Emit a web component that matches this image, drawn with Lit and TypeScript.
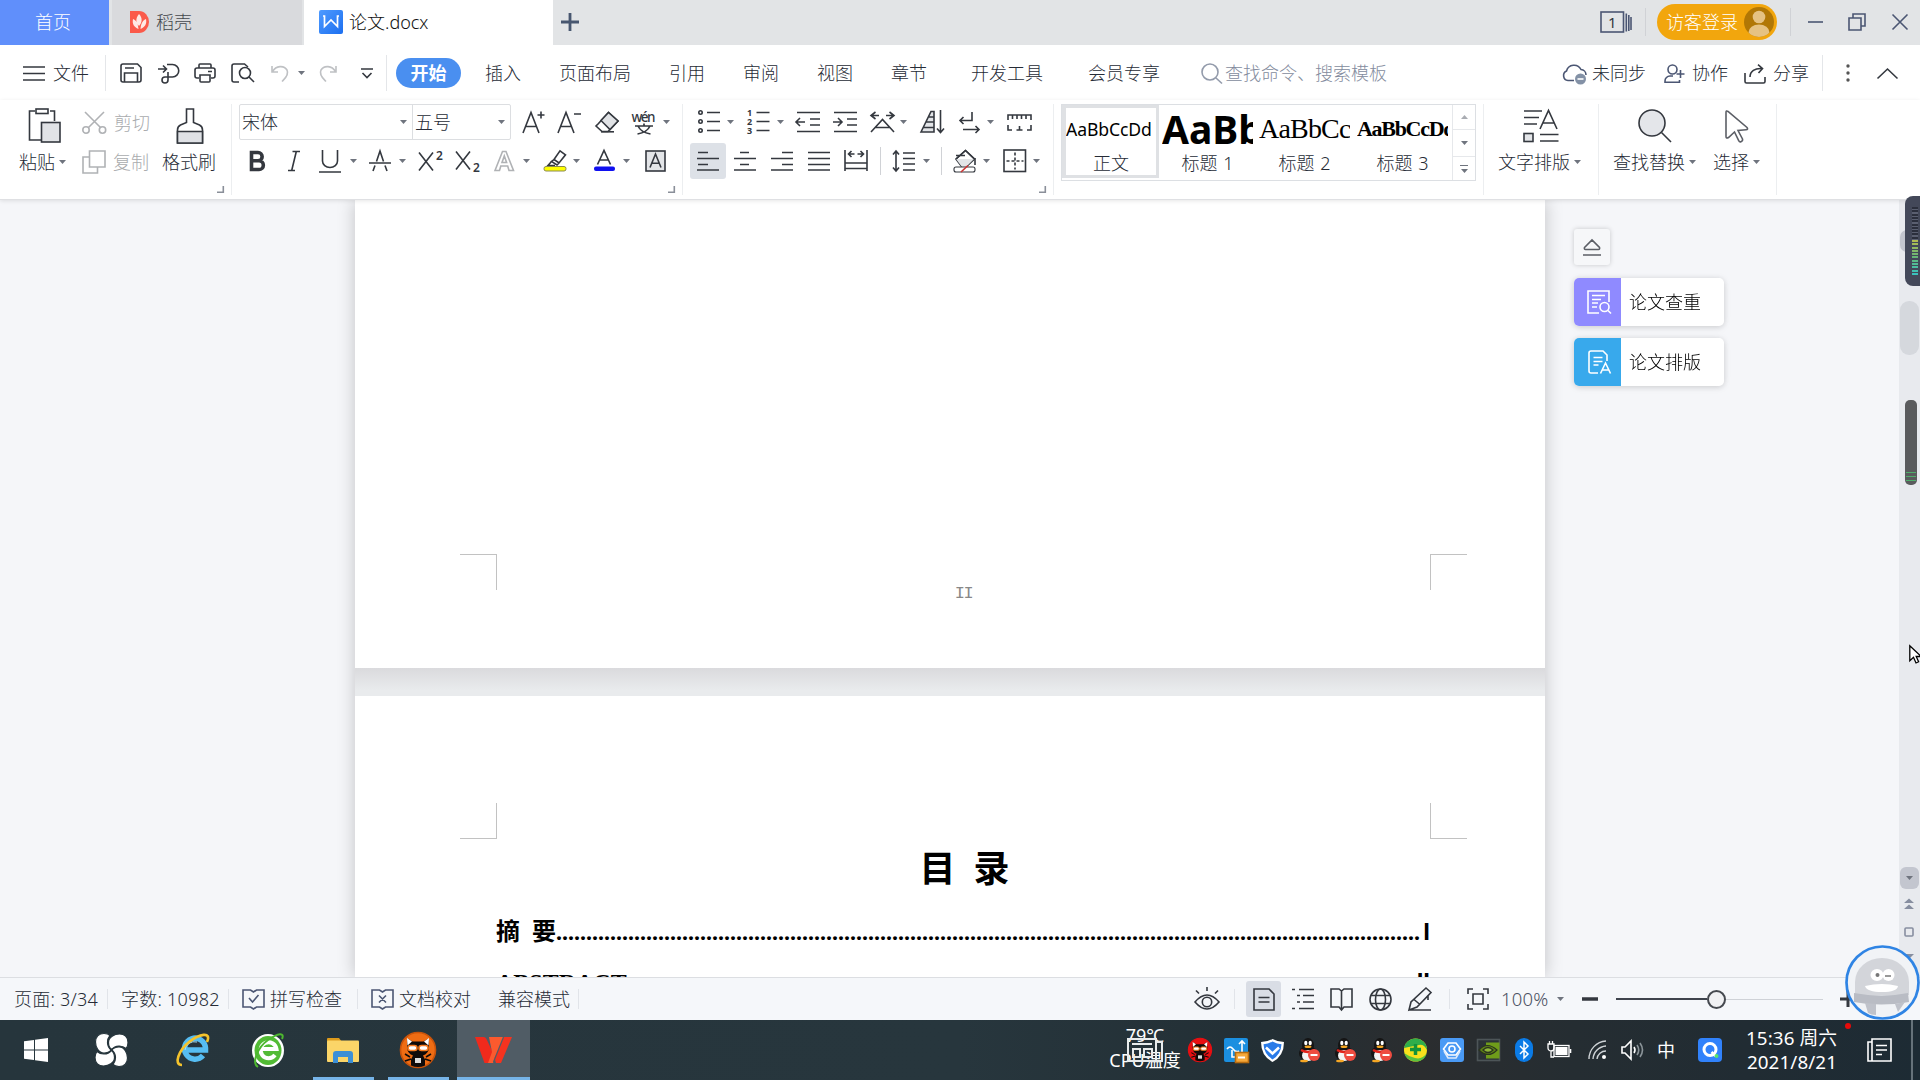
import { LitElement, html, svg, css } from "lit";
import { customElement } from "lit/decorators.js";

const ic = (w: number, h: number, body: unknown, cls = "") =>
  html`<svg class="ic ${cls}" width=${w} height=${h} viewBox="0 0 ${w} ${h}">${body}</svg>`;
const p = (d: string) => svg`<path d=${d}></path>`;
const caret = html`<svg class="caret" width="7" height="4" viewBox="0 0 7 4"><path d="M0 0h7L3.5 4z"></path></svg>`;
const corner = html`<svg class="ic corner" width="7" height="7" viewBox="0 0 7 7"><path d="M6.3 0V6.3H0"></path></svg>`;

/* ---------- title bar ---------- */
const docer = ic(19, 22, svg`<path d="M0 0h9a10 11 0 0 1 0 22H0z" fill="#fb5a4a" stroke="none"></path>
  <path d="M9 3c4 4 3 9 0 12C6 12 5 8 9 3zM3 8c3 1 5 4 5.500 10C4 16 2 13 3 8zM16 8c-3 1-5 4-5.500 10C15 16 17 13 16 8z" fill="#ffe9e4" stroke="none"></path>`);
const writer = ic(24, 24, svg`<defs><linearGradient id="wg" x1="0" y1="0" x2="1" y2="1"><stop offset="0" stop-color="#4f9bff"></stop><stop offset="1" stop-color="#1c6ff0"></stop></linearGradient></defs>
  <rect width="24" height="24" rx="2" fill="url(#wg)" stroke="none"></rect><path d="M4 6h1.500v10.500L12 10l6.500 6.500V6H20" stroke="#fff" stroke-width="1.700"></path>`);
const plus = ic(18, 18, svg`<path d="M9 0v18M0 9h18" stroke="#47566f" stroke-width="2.800"></path>`);
const tabsCount = html`<svg class="ic navy" width="32" height="22" viewBox="0 0 32 22"><rect x="1" y="1" width="22.500" height="20"></rect><path d="M26.300 2.500v18M28.800 4v16M31 6v13"></path><text class="cnt" x="8" y="16.500">1</text></svg>`;
const avatar = ic(30, 30, svg`<defs><clipPath id="ac"><circle cx="15" cy="15" r="15"></circle></clipPath></defs>
  <circle cx="15" cy="15" r="15" fill="#b17705" stroke="none"></circle><g clip-path="url(#ac)"><circle cx="15" cy="10" r="6.300" fill="#e6c282" stroke="none"></circle><ellipse cx="15" cy="25.500" rx="10.500" ry="8" fill="#e6c282" stroke="none"></ellipse></g>`);

/* ---------- quick access ---------- */
const burger = ic(22, 15, p("M0 1h22M0 7.500h22M0 14h22"));
const save = ic(22, 20, p("M3 1h14.500L21 4.500V17a2 2 0 0 1-2 2H3a2 2 0 0 1-2-2V3a2 2 0 0 1 2-2zM4.500 19V10h13v9M5 5h9"));
const exportPdf = ic(22, 21, p("M0 6h8M5 2.500L8.500 6 5 9.500M9 1.500h5.500a6.200 6.200 0 0 1 0 12.500H7a3 3 0 1 0 3 3V9"));
const print = ic(22, 20, p("M5 5V2a1 1 0 0 1 1-1h10a1 1 0 0 1 1 1v3M5 15H3a2 2 0 0 1-2-2V7a2 2 0 0 1 2-2h16a2 2 0 0 1 2 2v6a2 2 0 0 1-2 2h-2M6 12h10v6a1 1 0 0 1-1 1H7a1 1 0 0 1-1-1zM14 8.500h4"));
const preview = ic(24, 20, svg`<path d="M8 19H3a2 2 0 0 1-2-2V3a2 2 0 0 1 2-2h10.500L17 4"></path><circle cx="14" cy="10" r="5.500"></circle><path d="M18 14l5 5"></path>`);
const undo = ic(18, 17, p("M1 1v6h6M1.500 6.500C5 .5 13 0 16 5c2.500 5-3 9.500-5 11.500"), "dim");
const redo = ic(18, 17, p("M17 1v6h-6M16.500 6.500C13 .5 5 0 2 5c-2.500 5 3 9.500 5 11.500"), "dim");
const more = ic(12, 11, p("M0 1h12M1.500 5L6 9.500 10.500 5"));
const search = ic(22, 21, svg`<circle cx="9" cy="9" r="8"></circle><path d="M15 15l6 5.500"></path>`, "grayblue");
const cloud = ic(26, 22, svg`<path d="M12 18.500H6A5 5 0 0 1 4.500 9 7.800 7.800 0 0 1 19 7.500 5.500 5.500 0 0 1 24 13"></path><circle cx="18.500" cy="17" r="5.500" fill="#8391a6" stroke="none"></circle><path d="M15.500 17h6" stroke="#fff"></path>`, "navy");
const collab = ic(21, 20, svg`<circle cx="8.500" cy="6.500" r="4.500"></circle><path d="M16.500 7v8M12.500 11h8M9 13H6a5 5 0 0 0-5 5v1.200h14.500V17"></path>`, "navy");
const share = ic(22, 20, p("M1 10v8.500a1.500 1.500 0 0 0 1.500 1.500h17a1.500 1.500 0 0 0 1.500-1.500V14M6 14c0-6 5-9 12-8.500M14 1.700L18.500 5.500 14.500 10"));
const dots = ic(4, 20, svg`<circle cx="2" cy="3" r="1.700" fill="#555" stroke="none"></circle><circle cx="2" cy="10" r="1.700" fill="#555" stroke="none"></circle><circle cx="2" cy="17" r="1.700" fill="#555" stroke="none"></circle>`);
const chevUp = ic(21, 11, p("M.5 10.500L10.500 1l10 9.500"));

/* ---------- ribbon ---------- */
const paste = ic(33, 36, svg`<path d="M7 3H1.500v29H13M22 3h4.500v10"></path><rect x="8" y="1" width="12" height="4.500"></rect><rect x="13.500" y="14.500" width="18.500" height="19.500" fill="#e1e3e6"></rect>`);
const cut = ic(25, 22, svg`<path d="M3 0l16 16M22 0L6 16"></path><circle cx="4" cy="18" r="3.200"></circle><circle cx="20.500" cy="18" r="3.200"></circle>`, "dim2");
const copy = ic(24, 24, p("M7.500 1H23v16H7.500zM7.500 7H1v16h14.500v-6"), "dim2");
const brush = ic(28, 36, svg`<path d="M10.500 1h7v13.500l6 2.500q3 1.500 3 5v13H1.500V22q0-3.500 3-5l6-2.500z"></path><path d="M1.500 23.500h25V35h-25z" fill="#dfe1e5"></path>`);
const aPlus = ic(23, 24, p("M0 23L8 2.500 16 23M2.700 16.500h10.600M14.500 5h7M18 1.500v7"));
const aMinus = ic(25, 24, p("M0 23L8 2.500 16 23M2.700 16.500h10.600M16 4h7"));
const eraser = ic(24, 22, svg`<path d="M3.500 12.500L13.500 1.500l9.500 8.500-10 10.500H7L1 15z"></path><path d="M6 9.500l9 9 8-8.500L13.500 1.500z" fill="#e1e3e6"></path><path d="M6 20.800h13"></path>`);
const wen = html`<svg class="ic" width="24" height="26" viewBox="0 0 24 26"><text class="wen" x="-0.5" y="12.5" textLength="24">wén</text><path d="M3 17h18M12 14.500v2.500M6 17q3 6.500 12.500 8M18 17q-3 6.500-12.500 8" stroke-width="1.700"></path></svg>`;
const bold = html`<svg class="ic" width="17" height="22" viewBox="0 0 17 22"><path d="M2.500 2.500h6.500a4 4 0 0 1 0 8.300H2.500zM2.500 10.800h7.500a4.300 4.300 0 0 1 0 8.700H2.500z" stroke-width="3.600"></path></svg>`;
const italic = ic(12, 22, p("M4.500 1.500H12M0 20.500h7M8.300 1.500l-4.600 19"));
const underline = ic(22, 23, p("M3.500 0v11a7.500 6.500 0 0 0 15 0V0M0 22h22"));
const strike = ic(23, 22, p("M4 21l2-5.500M18 21l-2-5.500M7.500 11.500L11 1l3.500 10.500M0 13h22"));
const sup = html`<svg class="ic" width="25" height="22" viewBox="0 0 25 22"><path d="M1 2.500l14 18M15 2.500L1 20.500"></path><text class="sm" x="18" y="10">2</text></svg>`;
const sub = html`<svg class="ic" width="25" height="22" viewBox="0 0 25 22"><path d="M1 1.500l14 18M15 1.500L1 19.500"></path><text class="sm" x="18" y="21.500">2</text></svg>`;
const outlineA = ic(21, 22, p("M1 20.500L8.500 1.500h3.500L19.500 20.500H15L13.700 16H6.800L5.500 20.500zM8 12.500h4.600L10.300 6z"), "dim2");
const hilite = ic(24, 22, svg`<path d="M11 9.500L17 .8l5.500 4L16 13zM11 9.500L8.500 11.500 14 15l2-2M8.500 11.500L5 15.500h7"></path><rect x="1" y="16.500" width="22" height="4.500" rx="2" fill="#ff0" stroke="#8a8a52" stroke-width="1"></rect>`);
const fontColor = ic(21, 22, svg`<path d="M3.500 14.500L10 .5l6.500 14M5.500 10h9"></path><rect x="0" y="16.500" width="21" height="4.500" rx="2" fill="#1010f0" stroke="none"></rect>`);
const boxA = ic(21, 22, svg`<rect x="1" y="1" width="19" height="20" fill="#e3e5e8"></rect><path d="M5 17.500L10.500 4 16 17.500M7 13.300h7"></path>`);

const bullets = ic(24, 24, svg`<circle cx="2.500" cy="2.500" r="1.700"></circle><circle cx="2.500" cy="11.500" r="1.700"></circle><circle cx="2.500" cy="20.500" r="1.700"></circle><path d="M9 2.500h13M9 11.500h13M9 20.500h13"></path>`);
const numbers = html`<svg class="ic" width="24" height="24" viewBox="0 0 24 24"><text class="num" x="0" y="5.5">1</text><text class="num" x="0" y="14.5">2</text><text class="num" x="0" y="23.5">3</text><path d="M9.500 2.500h13M9.500 11.500h13M9.500 20.500h13"></path></svg>`;
const outdent = ic(24, 22, p("M1 1.500h23M14 8h10M14 14h10M1 20.500h23M0 11h9M4 7L0 11l4 4"));
const indent = ic(24, 22, p("M1 1.500h23M14 8h10M14 14h10M1 20.500h23M0 11h9M5 7l4 4-4 4"));
const asian = ic(25, 22, p("M5.500 1L1 4.500 5.500 8M1 4.500h8M19.500 1L24 4.500 19.500 8M24 4.500h-8M1 21L12.500 8.500 24 21M5.500 16.500h14"));
const sortIc = ic(24, 24, svg`<path d="M1 22L11 1.500h3V22zM6 12h8M3.500 17.500H14M8.500 7H14" fill="#e3e5e8"></path><path d="M20.500 0v22M17 18.500l3.500 4 3.500-4"></path>`);
const wrap = ic(21, 22, p("M13 1v8.500H1M4.500 6L1 9.500 4.500 13M4 18.500h16M16.500 15l3.500 3.500-3.500 3.500"));
const ruler = ic(25, 17, p("M1 6V1h23v5M5.500 1v4M10 1v4M14.500 1v4M19 1v4M1 11v5h4M20 16h4v-5M9.500 16h6M12.500 16v-4"));
const lines = (d: string) => ic(22, 20, p(d));
const alL = lines("M1 1.500h10M0 7.500h22M1 13.500h10M0 19h22");
const alC = lines("M6 1.500h9M0 7.500h22M6 13.500h9M0 19h22");
const alR = lines("M11 1.500h11M0 7.500h22M11 13.500h11M0 19h22");
const alJ = lines("M0 1.500h22M0 7.500h22M0 13.500h22M0 19h22");
const dist = ic(24, 22, p("M1 0v21M23 0v21M1 13h22M1 18.500h22M4.500 4h6M7.500 1l-3 3 3 3M19.500 4h-6M16.500 1l3 3-3 3"));
const spacing = ic(24, 22, p("M4 1v20M1 4.500L4 1l3 3.500M1 17.500L4 21l3-3.500M11 3h12M11 8.500h12M11 14h12M11 20h12"));
const fill = ic(25, 24, svg`<path d="M3 10L12.500 1.500l9 8.500-8.500 8H9z"></path><path d="M3 10h18l-8 8H9z" fill="#e3e5e8" stroke="none"></path><path d="M3 6.500h9M22 9v7M3 10L12.500 1.500l9 8.500"></path><rect x="1" y="18" width="21" height="5" rx="2" fill="#fff" stroke-width="1.100"></rect><path d="M8 23L15 16.500" stroke="#c33"></path>`);
const border = ic(24, 24, svg`<rect x="1" y="1" width="21.500" height="21.500"></rect><path d="M12 3.500v17M3.500 12h17" stroke-dasharray="3 2"></path>`);
const typeset = ic(36, 34, svg`<path d="M1 2h18M1 8.500h15M1 15h13M17 20L25.500 1.500 34 20M20 14h11M17 25.500h18.500M17 32h18.500"></path><rect x="1" y="24.500" width="9" height="8" fill="#e3e5e8"></rect>`);
const find = ic(34, 34, svg`<circle cx="14" cy="14" r="13" fill="#e4e6ea"></circle><path d="M23.500 23.500L33 33"></path>`);
const pick = ic(24, 34, p("M1 3.500q0-2.500 2-1L22 18.500q1.500 2-1 2.200l-8 .8 4.500 8.500q.5 2-1.500 2.700-1.500.5-2.300-1L9.500 23 3.500 28.500Q1 30 1 27.500z"), "gray");

/* ---------- status ---------- */
const book = (m: string) => ic(23, 22, p("M1 2h7.500l3 2 3-2H22v17h-7.500l-3 2-3-2H1z" + m), "navy");
const eye = ic(26, 24, svg`<path d="M1 15q12-14 24 0-12 14-24 0zM13 0v4M2 3.500l3 3M24 3.500l-3 3"></path><circle cx="13" cy="15" r="4.700"></circle>`);
const docIc = ic(22, 23, p("M1 1h15l5 5v16H1zM5.500 9.500h11M5.500 14h11"));
const outl = ic(22, 22, p("M0 1.500h3M7 1.500h15M5 7.500h3M11 7.500h11M5 14h3M11 14h11M0 20.500h3M7 20.500h15"));
const reader = ic(23, 23, p("M1 1h8l2.500 2L14 1h8v18h-8l-2.500 3L9 19H1zM11.500 3v18"));
const globe = ic(23, 23, svg`<circle cx="11.500" cy="11.500" r="10.500"></circle><ellipse cx="11.500" cy="11.500" rx="5" ry="10.500"></ellipse><path d="M2 7.500h19M2 15.500h19"></path>`);
const pen = ic(25, 24, p("M1 23l2-8L18 1l5 4.500L9 20zM6 12.500l6 5M1 23h22M20 8v5"));
const fit = ic(22, 22, p("M6 1H1v5M16 1h5v5M6 21H1v-5M16 21h5v-5M6 6h10v10H6z"));

/* ---------- taskbar ---------- */
const win = ic(24, 24, svg`<path d="M0 3.300L10 2v9.500H0zM11 1.800L24 0v11.500H11zM0 12.500h10V22L0 20.700zM11 12.500h13V24l-13-1.800z" fill="#fff" stroke="none"></path>`);
const petal = (a: number) => svg`<path transform="rotate(${a} 16.5 17)" d="M9 .5C3.500 .5 .5 4 .5 9s3 11 8.500 11c3 0 5.500-1 7-3C11.500 13 11.500 6.500 15 2.500 13 .5 11 .5 9 .5z"></path>`;
const swirl = ic(33, 34, svg`<g fill="#fff" stroke="#26353c" stroke-width="1.200">${petal(0)}${petal(90)}${petal(180)}${petal(270)}</g>`);
const ie = html`<svg class="ic" width="34" height="34" viewBox="0 0 34 34"><path d="M27 22.500a10.500 10.500 0 1 1 2.500-7.500v2H10" stroke="#56bdf2" stroke-width="5.500"></path><path d="M9 17a9.500 9 0 0 1 12-8" stroke="#a6e2fb" stroke-width="1"></path><path d="M6 32C-3 32 3 17 13 9S36-2 31 9" stroke="#f4c32c" stroke-width="2.600"></path></svg>`;
const greenE = html`<svg class="ic" width="33" height="35" viewBox="0 0 33 35"><ellipse cx="16" cy="17.5" rx="16" ry="16.5" fill="#fff" stroke="none"></ellipse><ellipse cx="16" cy="17.5" rx="13.500" ry="14.500" fill="#52bb35" stroke="none"></ellipse><path d="M23 22a8 8 0 1 1 1.500-6H10" stroke="#fff" stroke-width="4"></path><path d="M6 34C-1 30 6 14 16 7S33-1 30 6" stroke="#4db82f" stroke-width="2"></path></svg>`;
const folder = ic(33, 27, svg`<path d="M0 2a1 1 0 0 1 1-1h11l3 4H0z" fill="#dd9b1c" stroke="none"></path><rect y="3.5" x="0" width="32" height="21.5" rx="1" fill="#fbd568" stroke="none"></rect><path d="M6 26V17q0-3 3-3h14q3 0 3 3v9h-5v-6H11v6z" fill="#3c8fd6" stroke="none"></path>`);
const cat = (bg: string, rim: string) => svg`<ellipse cx="18" cy="18" rx="17.500" ry="17.500" fill=${bg} stroke=${rim}></ellipse>
  <path d="M7.500 6.500l5 3h11l5-3 .5 8q0 7-6 9l2 4v6q-7 3-14 0v-6l2-4q-6-2-6-9z" fill="#100b0a" stroke="none"></path>
  <path d="M7 6l5 3.500-4.500 4zM29 6l-5 3.500 4.500 4z" fill="#fff" stroke="none"></path>
  <rect x="8" y="13.500" width="9" height="5" rx="2.5" fill="#fff" stroke="#f57b22"></rect><rect x="19" y="13.500" width="9" height="5" rx="2.5" fill="#fff" stroke="#f57b22"></rect>
  <path d="M5 22l5 3M31 22l-5 3M5 29l6-2M31 29l-6-2" stroke="#100b0a"></path><rect x="15" y="26" width="6" height="5" fill="#ddd" stroke="none"></rect>`;
const catBig = ic(36, 36, cat("#ef6c13", "#c9530a"));
const wps = ic(37, 28, svg`<path d="M0 1h8.500q2 0 3 2l7 15-4 9H9.500z" fill="#f02a1c" stroke="none"></path><path d="M14 1h15L18 27h-5l4-11z" fill="#fb5a2e" stroke="none"></path><path d="M29 1h8L26 27h-5l-1.500-5z" fill="#f5331f" stroke="none"></path><path d="M28.500 1L18.500 26" stroke="#515d66" stroke-width="1.200"></path>`);
const redCat = html`<svg class="ic" width="24" height="24" viewBox="0 0 36 36">${cat("#e80f12", "#e80f12")}</svg>`;
const sync = ic(25, 25, svg`<rect width="24" height="24" rx="2" fill="#1b8fe0" stroke="none"></rect><path d="M3 11q3-4 6 0t6 2M18 14V3M15 6l3-3 3 3M8 12v7h5" stroke="#fff"></path><rect x="11.500" y="14.500" width="13" height="10" fill="#f7a93a" stroke="#b86c10"></rect><path d="M14 19.500h7" stroke="#fff" stroke-width="2"></path>`);
const shield = ic(23, 23, svg`<path d="M11.500 0Q17 3 23 3q0 14-11.500 20Q0 17 0 3 6 3 11.500 0z" fill="#fff" stroke="none"></path><path d="M11.500 2.500Q16 5 20.500 5.200q-.5 10-9 15.200Q3 15 2.500 5.200 7 5 11.500 2.500z" fill="#2a7be8" stroke="none"></path><path d="M5 8.500l6.500 6 6.500-6" stroke="#fff" stroke-width="2.500"></path>`);
const qq = ic(23, 24, svg`<ellipse cx="10" cy="15.500" rx="9" ry="7.500" fill="#151515" stroke="none"></ellipse><ellipse cx="10" cy="7.500" rx="6" ry="7.500" fill="#151515" stroke="none"></ellipse><ellipse cx="10" cy="17.500" rx="6" ry="5.500" fill="#f3f3f3" stroke="none"></ellipse><ellipse cx="7.800" cy="5" rx="1.600" ry="2.200" fill="#fff" stroke="none"></ellipse><ellipse cx="12.200" cy="5" rx="1.600" ry="2.200" fill="#fff" stroke="none"></ellipse><ellipse cx="10" cy="8.700" rx="3.500" ry="1.300" fill="#f5a623" stroke="none"></ellipse><path d="M3 12q7 4 14 0" stroke="#e2231a" stroke-width="2.500"></path><ellipse cx="6" cy="23" rx="4" ry="1.300" fill="#f5a623" stroke="none"></ellipse><circle cx="16" cy="17" r="6" fill="#ee4c40" stroke="none"></circle><path d="M12.500 17h7" stroke="#fff" stroke-width="2"></path>`);
const guard = ic(23, 24, svg`<circle cx="11.500" cy="12" r="11.500" fill="#f8e11c" stroke="none"></circle><path d="M11.500 .5A11.500 11.500 0 0 1 23 12q-3-6-8-5T0 10Q2 1 11.500 .5z" fill="#2fae4b" stroke="none"></path><path d="M0 15q3 8 11.500 8.500T23 15q-5 7-12 5T0 15z" fill="#5bc23f" stroke="none"></path><path d="M11.500 6v11M6 11.500h11" stroke="#14943a" stroke-width="3.500"></path>`);
const gear = ic(24, 24, svg`<rect width="24" height="24" rx="3" fill="#4a9af5" stroke="none"></rect><path d="M8 5h8l4.500 6-4.500 6H8l-4.500-6z" stroke="#fff"></path><path d="M4 13l4 7h8l4-7" stroke="#dbe9fb"></path><circle cx="12" cy="11" r="3" stroke="#fff"></circle>`);
const nvidia = ic(24, 22, svg`<rect x=".5" y=".5" width="22" height="21" fill="#2b3236" stroke="#4d5558"></rect><path d="M9 3.500h13.500v16H9z" fill="#6f9c1a" stroke="none"></path><path d="M2 11q8-9 18 0-9 9-18 0z" fill="#5d8416" stroke="#2b331f" stroke-width="1.200"></path><path d="M6 11q5-5 10 0-5 5-10 0z" fill="#8fb53a" stroke="#2b331f" stroke-width="1.200"></path>`);
const bt = ic(18, 24, svg`<rect width="18" height="24" rx="9" fill="#0b7be6" stroke="none"></rect><path d="M5 8l8 8-4 4V4l4 4-8 8" stroke="#fff" stroke-width="1.500"></path>`);
const battery = ic(25, 18, svg`<path d="M1 3h6v4a3 3 0 0 1-6 0zM2.500 0v3M5.500 0v3M4 10v6h3" stroke="#fff" stroke-width="1.300"></path><rect x="7" y="4.500" width="15" height="11" stroke="#fff" stroke-width="1.300"></rect><rect x="8.500" y="6" width="12" height="8" fill="#fff" stroke="none"></rect><path d="M23.500 8v4" stroke="#fff"></path>`);
const wifi = ic(20, 20, svg`<g stroke="#cfd4d7" stroke-width="1.400"><path d="M1 19A18 18 0 0 1 18 1M5 19A14 14 0 0 1 18 6M9 19a9 9 0 0 1 9-8"></path></g><circle cx="16" cy="17" r="2" fill="#fff" stroke="none"></circle>`);
const speaker = ic(23, 20, svg`<path d="M1 7h3l6-6v18l-6-6H1z" stroke="#fff"></path><path d="M13 7q2 3 0 6" stroke="#fff"></path><path d="M16 5q3.500 5 0 10M19 3q5 7 0 14" stroke="#8b9499"></path>`);
const qIcon = ic(24, 24, svg`<rect width="24" height="24" rx="4" fill="#3182fb" stroke="none"></rect><circle cx="12" cy="11.500" r="6" stroke="#fff" stroke-width="3"></circle><path d="M13.500 14l4 4" stroke="#fff" stroke-width="2.500"></path><circle cx="18.500" cy="18" r="2" fill="#57e36c" stroke="none"></circle>`);
const notice = ic(25, 25, svg`<path d="M5 1h19v22H5zM5 4H1v19h4M9 7.500h11M9 12h11M9 16.500h6" stroke="#fff"></path>`);
const news = ic(36, 26, svg`<path d="M1 2h28v22H1zM29 5h6v19H4M5 7h20M6 12h7v8H6zM17 12h8v8h-8z" stroke="#e8ebec" stroke-width="2"></path>`);

@customElement("app-root")
export class AppRoot extends LitElement {
  static styles = css`
    :host { display: block; }
    * { box-sizing: border-box; }
    .app { position: relative; width: 1920px; height: 1080px; overflow: hidden; display: flex; flex-direction: column; background: #f5f6f9;
      font-family: "Noto Sans", "Noto Sans CJK SC", sans-serif; font-size: 18px; font-weight: 300; line-height: 24px; color: #262b36; white-space: nowrap; }
    svg { display: block; overflow: visible; flex: none; }
    .ic { fill: none; stroke: #34383f; stroke-width: 1.6; }
    .ic text { stroke: none; fill: #34383f; }
    .ic.dim { stroke: #bfc1c4; } .ic.dim2 { stroke: #b0b2b5; } .ic.navy { stroke: #4b5673; } .ic.grayblue { stroke: #939bab; } .ic.gray { stroke: #5c5f66; }
    .caret { fill: #6f747e; }
    .wen { font: 500 13.5px "Noto Sans"; } .num { font: 700 9px "Noto Sans"; } .sm { font: 600 12px "Noto Sans"; } .cnt { font: 15px "Noto Sans"; }

    .title { height: 45px; flex: none; display: flex; background: #e2e4e6; }
    .tab { height: 45px; display: flex; align-items: center; padding-bottom: 1px; }
    .home { width: 109px; padding-left: 35px; background: #608ffb; color: #fff; }
    .shell { width: 190px; margin-left: 3px; padding-left: 18px; gap: 7px; background: #d9dadd; color: #44474d; }
    .doc { width: 249px; margin-left: 2px; padding-left: 15px; gap: 6px; background: #fff; color: #111; }
    .add { padding-left: 8px; width: 40px; }
    .wctl { margin-left: auto; display: grid; grid-template-columns: 45px 12px 133px 18px 40px 44px 28px; align-items: center; height: 43px; }
    .bar { width: 1px; height: 28px; background: #d0d2d6; }
    .login { width: 120px; height: 36px; border-radius: 18px; background: #f2a60d; color: #fff; display: flex; align-items: center; padding-left: 9px; gap: 6px; }

    .menu { height: 55px; flex: none; background: #fff; display: grid; align-items: center; padding: 1px 0 0 23px;
      grid-template-columns: 30px 52px 15px 38px 36px 37px 40px 27px 21px 42px 25px 10px 89px 74px 110px 74px 74px 74px 80px 117px 113px 24px 337px 30px 72px 28px 52px 29px 49px 24px 31px 25px; }
    .menu .bar { height: 36px; background: #e4e6e9; }
    .pill { width: 65px; height: 30px; border-radius: 15px; background: #4a8ff0; color: #fff; font-weight: 700; display: flex; align-items: center; justify-content: center; }
    .hint { color: #838b9d; }

    .ribbon { height: 100px; flex: none; background: #fff; border-bottom: 1px solid #dfe0e3; display: flex; padding-top: 4px; position: relative; z-index: 1; box-shadow: 0 1px 4px #0000001a; }
    .grp { height: 91px; border-right: 1px solid #eceef0; display: flex; flex-direction: column; }
    .clip { width: 232px; display: grid; grid-template-columns: 82px 80px 69px; grid-template-rows: 82px 9px; }
    .big { display: flex; flex-direction: column; align-items: flex-start; gap: 6px; padding-top: 4px; }
    .lab { display: flex; align-items: center; gap: 4px; height: 24px; }
    .c1 { padding-left: 19px; } .c1 .ic { margin-left: 9px; }
    .c3 .ic { margin-left: 14px; }
    .pair { display: flex; flex-direction: column; padding-top: 7px; gap: 15px; color: #a9abae; }
    .pair div { display: flex; gap: 7px; align-items: center; height: 24px; }
    .corner { align-self: flex-end; stroke: #8a8f99; margin: 7px 7px 0 0; }
    .clipc { grid-column: 1 / -1; justify-self: end; margin-top: -7px; }
    .row { display: grid; align-items: center; height: 36px; flex: none; }
    .row + .row { margin-top: 3px; }
    .font { width: 451px; padding-left: 7px; }
    .f1 { grid-template-columns: 284px 35px 37px 37px 31px auto; }
    .f2 { padding-left: 10px; grid-template-columns: 39px 31px 31px 19px 30px 19px 37px 39px 29px 20px 30px 21px 29px 22px auto; }
    .fbox { width: 272px; height: 36px; border: 1px solid #dcdee1; border-radius: 2px; display: grid; grid-template-columns: 172px 98px; }
    .fbox div { display: flex; align-items: center; justify-content: space-between; padding: 0 5px 0 2px; }
    .fbox div + div { border-left: 1px solid #dcdee1; padding-right: 5px; }
    .para { width: 371px; }
    .p1 { padding-left: 15px; grid-template-columns: 29px 20px 30px 19px 37px 37px 30px 20px 39px 28px 20px 24px; }
    .p2 { padding-left: 7px; grid-template-columns: 44px 37px 37px 36px 36px 12px 31px 18px 12px 30px 20px 30px auto; }
    .on { width: 36px; height: 36px; background: #dde1e7; border-radius: 3px; display: flex; align-items: center; justify-content: center; }
    .sty { width: 430px; padding-left: 7px; }
    .gallery { width: 415px; height: 77px; border: 1px solid #dcdfe3; display: grid; grid-template-columns: 97px 97px 97px 99px 23px; }
    .st { display: flex; flex-direction: column; align-items: center; height: 75px; overflow: hidden; }
    .st.sel { border: 3px solid #dfe1e4; border-left-width: 4px; height: 73px; }
    .sm1 { height: 44px; display: flex; align-items: center; width: 91px; overflow: hidden; color: #000; flex: none; padding-top: 4px; font-weight: 400; }
    .st .lb { margin-top: 2px; word-spacing: 1px; }
    .st.sel .sm1 { width: 90px; margin-top: -3px; padding-left: 0; }
    .n0 { font-size: 17.6px; letter-spacing: -0.1px; }
    .n1 { font: 700 39px/42px "Noto Sans"; }
    .n2 { font: 28px/42px "Liberation Serif"; letter-spacing: -.8px; }
    .n3 { font: 700 22px/42px "Liberation Serif"; letter-spacing: -1.3px; }
    .scr { border-left: 1px solid #e6e8eb; display: grid; grid-template-rows: 25px 27px 23px; justify-items: center; align-items: center; }
    .scr div { width: 100%; height: 100%; display: flex; flex-direction: column; align-items: center; justify-content: center; gap: 3px; border-bottom: 1px solid #e6e8eb; }
    .scr div:last-child { border: 0; }
    .flip { transform: scaleY(-1); opacity: .6; }
    .ln { width: 8px; height: 1px; background: #6f747e; }
    .tys .big, .fnd .big { padding-top: 5px; gap: 7px; }
    .tys { width: 115px; padding-left: 14px; } .tys .ic { margin-left: 25px; }
    .fnd { width: 178px; padding-left: 14px; flex-direction: row; gap: 17px; }
    .fnd .f .ic { margin-left: 25px; } .fnd .s .ic { margin-left: 12px; }

    .work { height: 777px; flex: none; display: flex; overflow: hidden; background: #f5f6f9; }
    .pages { margin-left: 355px; width: 1190px; display: flex; flex-direction: column; box-shadow: 0 0 17px #00000036; background: linear-gradient(#dadadd, #e9ebed 80%) 0 468px / 100% 28px no-repeat; flex: none; }
    .page { background: #fff; display: flex; flex-direction: column; }
    .pg1 { height: 468px; padding: 354px 78px 0 105px; }
    .pg2 { height: 281px; margin-top: 28px; padding: 107px 78px 0 105px; overflow: hidden; flex: none; }
    .marks { display: flex; justify-content: space-between; flex: none; }
    .m { width: 37px; height: 36px; border: 0 solid #c2c2c2; }
    .bl { border-width: 0 1px 1px 0; } .br { border-width: 0 0 1px 1px; } .tl { border-width: 1px 1px 0 0; } .tr { border-width: 1px 0 0 1px; }
    .pn { font: 17px/20px "Liberation Mono", monospace; color: #888; letter-spacing: -1.5px; text-align: center; margin-top: -6px; padding-left: 0; }
    .toc { font: 700 36px/44px "Noto Sans CJK SC", sans-serif; color: #000; text-align: center; margin-top: 5px; padding-left: 2px; flex: none; }
    .toc span { margin-left: 18px; }
    .entry { width: 934px; margin: 29px 0 0 36px; height: 24px; display: flex; align-items: baseline; color: #000; font: 700 24px/24px "Liberation Serif", "Noto Sans CJK SC", serif; flex: none; padding-right: 0; }
    .entry + .entry { margin-top: 26px; }
    .entry i { font-style: normal; flex: 1; width: 0; overflow: hidden; height: 30px; line-height: 30px; }
    .entry b { font: 700 24px/24px "Liberation Sans"; }
    .sp { margin-left: 12px; }
    .side { margin-left: 29px; padding-top: 29px; display: flex; flex-direction: column; width: 150px; }
    .fold { width: 36px; height: 36px; background: #f6f7f9; border-radius: 3px; box-shadow: 0 0 5px #00000030; display: flex; align-items: center; justify-content: center; }
    .card { width: 150px; height: 48px; background: #fff; border-radius: 5px; box-shadow: 0 1px 7px #00000018; margin-top: 13px; display: flex; align-items: center; color: #000; gap: 8px; overflow: hidden; flex: none; }
    .wrapc { filter: drop-shadow(0 1px 3px #00000018); }
    .card + .card { margin-top: 12px; }
    .card span { width: 47px; height: 48px; display: flex; align-items: center; justify-content: center; padding-left: 3px; }
    .card .ic { stroke: #fff; }
    .vio { background: #8f8aff; } .sky { background: #38a9ec; }
    .sb { margin-left: auto; width: 21px; background: #e8eaee; display: flex; flex-direction: column; align-items: flex-start; padding: 30px 0 0 1px; }
    .upb { width: 19px; height: 22px; border-radius: 7px; background: #c3c6cf; flex: none; }
    .thumb { width: 19px; height: 54px; border-radius: 9px; background: #d5d8dd; margin-top: 49px; flex: none; }
    .down { width: 19px; height: 22px; border-radius: 6px; background: #c3c6cf; margin-top: 512px; display: flex; align-items: center; justify-content: center; flex: none; }
    .sb .ic { margin-left: 4px; }

    .status { height: 43px; flex: none; background: #f5f7fa; border-top: 1px solid #dcdee2; display: grid; align-items: center; padding-left: 14px;
      grid-template-columns: 93px 14px 107px 14px 28px 87px 14px 28px 99px 80px 616px 40px 12px 46px 38px 39px 39px 41px 18px 34px 56px 25px 34px 208px auto; }
    .status .bar { height: 20px; background: #e1e4e9; }
    .wide { letter-spacing: .25px; }
    .view { width: 35px; height: 36px; background: #d9dde5; border-radius: 3px; display: flex; align-items: center; justify-content: center; }
    .pct { font-size: 18.5px; color: #4b5162; letter-spacing: .2px; }
    .slider { display: flex; align-items: center; width: 208px; }
    .done { width: 91px; height: 1.5px; background: #3f444d; } .knob { width: 19px; height: 19px; border-radius: 50%; border: 2px solid #45494f; background: #f0f1f3; } .rest { width: 97px; height: 1px; background: #cfd2d7; }
    .plus { padding-left: 16px; }

    .task { height: 60px; flex: none; display: flex; color: #fff; background: linear-gradient(90deg, #26353c, #27363d 50%, #232f35 66%, #2b2d2f 74%, #252d32 82%, #1d2b34); }
    .app1 { height: 60px; display: flex; align-items: center; justify-content: center; border-bottom: 3px solid transparent; padding-top: 3px; }
    .a1 { width: 72px; } .a2 { width: 78px; } .a3 { width: 86px; } .a4 { width: 64px; margin-right: 13px; }
    .run { width: 61px; border-bottom-color: #76b4e8; margin-right: 14px; }
    .run2 { width: 61px; border-bottom-color: #76b4e8; margin-right: 8px; }
    .run2 .ic { margin-left: -2px; }
    .cur { width: 73px; border-bottom-color: #76b4e8; background: #505c65; }
    .tray { margin-left: auto; display: grid; align-items: center; height: 60px;
      grid-template-columns: 79px 36px 37px 37px 36px 36px 34px 36px 37px 38px 32px 41px 33px 36px 41px 48px 121px 44px 7px; width: 811px; }
    .temp { position: relative; width: 72px; height: 60px; line-height: 25px; text-align: center; padding-top: 3px; font-weight: 400; }
    .temp .ic { position: absolute; left: 18px; top: 17px; }
    .clock { text-align: right; width: 91px; line-height: 24px; font-size: 18.8px; letter-spacing: .1px; font-weight: 400; }
    .desk { width: 2px; height: 60px; background: #66727a; }
    .zh { line-height: 24px; font-weight: 400; }

    .meter { position: absolute; left: 1905px; top: 196px; width: 24px; height: 90px; background: #434859; border-radius: 8px; z-index: 3; padding: 11px 7px; }
    .mt { width: 6px; height: 33px; background: repeating-linear-gradient(#2b2f3c 0 2px, #5a5f70 2px 3.3px); }
    .mb { width: 6px; height: 35px; background: repeating-linear-gradient(transparent 0 2px, #434859 2px 3.3px), linear-gradient(#b5bb4f, #63b678 50%, #38c3c1); }
    .meter2 { position: absolute; left: 1905px; top: 400px; width: 12px; height: 85px; background: #5a5b5d; border-radius: 5px; z-index: 3; padding: 72px 1px 0; }
    .g { height: 11px; background: repeating-linear-gradient(#4fae6a 0 1.5px, transparent 1.5px 4px); }
    .ptr { position: absolute; left: 1909px; top: 645px; z-index: 4; }
    .bot { position: absolute; left: 1845px; top: 945px; z-index: 4; }
    .dot { position: absolute; left: 1845px; top: 1023px; width: 6px; height: 6px; border-radius: 50%; background: #e60a0a; z-index: 5; }
  `;

  render() {
    return html`<div class="app">
      <div class="title">
        <div class="tab home">首页</div>
        <div class="tab shell">${docer}<span>稻壳</span></div>
        <div class="tab doc">${writer}<span>论文.docx</span></div>
        <div class="tab add">${plus}</div>
        <div class="wctl">${tabsCount}<i class="bar"></i><div class="login">访客登录${avatar}</div><i class="bar"></i>
          ${ic(15, 2, p("M0 1h15"), "navy")}
          ${ic(18, 18, p("M5 5V1h12v12h-4M1 5h12v12H1z"), "navy")}
          ${ic(16, 16, p("M.5.5l15 15M15.500.5l-15 15"), "navy")}</div>
      </div>
      <div class="menu">
        ${burger}<span>文件</span><i class="bar"></i>${save}${exportPdf}${print}${preview}${undo}${caret}${redo}${more}<i class="bar"></i>
        <div class="pill">开始</div>
        ${["插入", "页面布局", "引用", "审阅", "视图", "章节", "开发工具", "会员专享"].map((t) => html`<span>${t}</span>`)}
        ${search}<span class="hint">查找命令、搜索模板</span>
        ${cloud}<span>未同步</span>${collab}<span>协作</span>${share}<span>分享</span><i class="bar"></i>${dots}${chevUp}
      </div>
      <div class="ribbon">
        <div class="grp clip">
          <div class="big c1">${paste}<div class="lab">粘贴${caret}</div></div>
          <div class="pair"><div>${cut}剪切</div><div>${copy}复制</div></div>
          <div class="big c3">${brush}<div class="lab">格式刷</div></div>
          <div class="clipc">${corner}</div>
        </div>
        <div class="grp font">
          <div class="row f1"><div class="fbox"><div>宋体${caret}</div><div>五号${caret}</div></div>${aPlus}${aMinus}${eraser}${wen}${caret}</div>
          <div class="row f2">${bold}${italic}${underline}${caret}${strike}${caret}${sup}${sub}${outlineA}${caret}${hilite}${caret}${fontColor}${caret}${boxA}</div>
          ${corner}
        </div>
        <div class="grp para">
          <div class="row p1">${bullets}${caret}${numbers}${caret}${outdent}${indent}${asian}${caret}${sortIc}${wrap}${caret}${ruler}</div>
          <div class="row p2"><div class="on">${alL}</div>${alC}${alR}${alJ}${dist}<i class="bar"></i>${spacing}${caret}<i class="bar"></i>${fill}${caret}${border}${caret}</div>
          ${corner}
        </div>
        <div class="grp sty"><div class="gallery">
          <div class="st sel"><div class="sm1 n0">AaBbCcDd</div><div class="lb">正文</div></div>
          <div class="st"><div class="sm1 n1">AaBb</div><div class="lb">标题 1</div></div>
          <div class="st"><div class="sm1 n2">AaBbCc</div><div class="lb">标题 2</div></div>
          <div class="st"><div class="sm1 n3">AaBbCcDd</div><div class="lb">标题 3</div></div>
          <div class="scr"><div><span class="flip">${caret}</span></div><div>${caret}</div><div><i class="ln"></i>${caret}</div></div>
        </div></div>
        <div class="grp tys"><div class="big">${typeset}<div class="lab">文字排版${caret}</div></div></div>
        <div class="grp fnd"><div class="big f">${find}<div class="lab">查找替换${caret}</div></div><div class="big s">${pick}<div class="lab">选择${caret}</div></div></div>
      </div>
      <div class="work">
        <div class="pages">
          <div class="page pg1"><div class="marks"><i class="m tl"></i><i class="m tr"></i></div><div class="pn">II</div></div>
          <div class="page pg2"><div class="marks"><i class="m bl"></i><i class="m br"></i></div>
            <div class="toc">目<span>录</span></div>
            <div class="entry"><span>摘<span class="sp">要</span></span><i>${".".repeat(144)}</i><b>I</b></div>
            <div class="entry"><span>ABSTRACT</span><i>${".".repeat(131)}</i><b>II</b></div>
          </div>
        </div>
        <div class="side">
          <div class="fold">${ic(18, 17, p("M0 16h18M1.500 8.500L9 1l7.500 7.500q.5 2-1 2h-13q-1.500 0-1-2z"), "gray")}</div>
          <div class="wrapc">
            <div class="card"><span class="vio">${ic(24, 24, svg`<path d="M12 23H1V1h21v11M5 5.500h13M5 9.500h9M5 13h6M5 17h5"></path><circle cx="17.500" cy="17" r="4.500"></circle><path d="M21 20.500l3 3"></path>`)}</span>论文查重</div>
            <div class="card"><span class="sky">${ic(22, 24, p("M10 23H3a2 2 0 0 1-2-2V3a2 2 0 0 1 2-2h12l4 4v6M5.500 7.500h9M5.500 11.500h9M5.500 15h5M12.500 23.500L17.500 13l5 10.500M14.500 20h6"))}</span>论文排版</div>
          </div>
        </div>
        <div class="sb"><div class="upb"></div><div class="thumb"></div><div class="down">${caret}</div>
          <svg class="ic" width="10" height="66" viewBox="0 0 10 66"><path d="M0 14L5 9.500l5 4.500zM0 20L5 15.500l5 4.500z" fill="#878ea0" stroke="none"></path><rect x="1" y="39" width="8" height="8" rx="1" stroke="#878ea0"></rect><path d="M0 65h10l-5 5z" fill="#878ea0" stroke="none"></path></svg>
        </div>
      </div>
      <div class="status">
        <span class="wide">页面: 3/34</span><i class="bar"></i><span class="wide">字数: 10982</span><i class="bar"></i>${book("M7 10l3.500 4 6-7")}<span>拼写检查</span><i class="bar"></i>${book("M8 7.500l7 7M15 7.500l-7 7")}<span>文档校对</span><span>兼容模式</span><i class="bar"></i>
        ${eye}<i class="bar"></i><div class="view">${docIc}</div>${outl}${reader}${globe}${pen}<i class="bar"></i>${fit}<span class="pct">100%</span>${caret}
        ${ic(16, 4, svg`<path d="M0 2h16" stroke-width="3.500"></path>`)}<div class="slider"><i class="done"></i><i class="knob"></i><i class="rest"></i></div><div class="plus">${ic(16, 16, svg`<path d="M0 8h16M8 0v16" stroke-width="3"></path>`)}</div>
      </div>
      <div class="task">
        <div class="app1 a1">${win}</div><div class="app1 a2">${swirl}</div><div class="app1 a3">${ie}</div><div class="app1 a4">${greenE}</div>
        <div class="app1 run">${folder}</div><div class="app1 run2">${catBig}</div><div class="app1 cur">${wps}</div>
        <div class="tray"><div class="temp">79℃<br />CPU温度${news}</div>${redCat}${sync}${shield}${qq}${qq}${qq}${guard}${gear}${nvidia}${bt}${battery}${wifi}${speaker}<span class="zh">中</span>${qIcon}<div class="clock">15:36 周六<br />2021/8/21</div>${notice}<i class="desk"></i></div>
      </div>
      <div class="meter"><div class="mt"></div><div class="mb"></div></div>
      <div class="meter2"><div class="g"></div></div>
      <svg class="ptr" width="14" height="20" viewBox="0 0 14 20"><path d="M.8.8v15l3.700-3.500 2.500 5.700 2.600-1.200L7.200 11.500h5z" fill="#fff" stroke="#000" stroke-width="1.300"></path></svg>
      <svg class="bot" width="75" height="75" viewBox="0 0 75 75"><circle cx="37.5" cy="37.5" r="36" fill="#f1f3f6"></circle><path d="M10 50V37a27 24 0 0 1 54 0v13z" fill="#d3d5da"></path><path d="M9 48q28 5 54 0l1 9q-28 5-55 0z" fill="#b9bcc4"></path><path d="M20 58l11 1v11q-5 0-8-2zM50 59l10-2-7 10z" fill="#bfc2ca"></path><ellipse cx="32" cy="30" rx="6.5" ry="6" fill="#fff"></ellipse><ellipse cx="43.5" cy="30" rx="6" ry="6" fill="#fff"></ellipse><circle cx="32.5" cy="30" r="2" fill="#777"></circle><path d="M40 31h6" stroke="#999" stroke-width="2"></path><path d="M20 41q17-4 33 0-1 6-16 6t-17-6z" fill="#fff"></path><circle cx="37.5" cy="37.5" r="36" fill="none" stroke="#2f84e4" stroke-width="2.7"></circle></svg>
      <i class="dot"></i>
    </div>`;
  }
}
